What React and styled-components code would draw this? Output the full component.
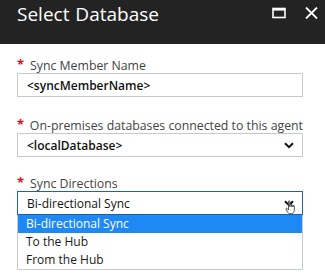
import React from "react";
import styled, { createGlobalStyle } from "styled-components";

const Global = createGlobalStyle`
  body {
    margin: 0;
    background: #ffffff;
    font-family: "Open Sans", "Noto Sans", sans-serif;
  }
`;

const App = () => {
  return (
    <Blade>
      <Global />
      <Header>
        <Title>Select Database</Title>
        <HeaderIcons>
          <svg width="14" height="12" viewBox="0 0 14 12">
            <rect x="1" y="1.5" width="12" height="9" fill="none" stroke="#fff" strokeWidth="1.6" />
            <rect x="1" y="1" width="12" height="2.6" fill="#fff" />
          </svg>
          <svg width="13" height="12" viewBox="0 0 13 12">
            <path d="M1 0.5 L12 11.5 M12 0.5 L1 11.5" stroke="#fff" strokeWidth="1.8" />
          </svg>
        </HeaderIcons>
      </Header>

      <Content>
        <Field>
          <Label>
            <Star>*</Star>Sync Member Name
          </Label>
          <Box>
            <Value bold>&lt;syncMemberName&gt;</Value>
          </Box>
        </Field>

        <Field gap={21}>
          <Label>
            <Star>*</Star>On-premises databases connected to this agent
          </Label>
          <Box>
            <Value bold>&lt;localDatabase&gt;</Value>
            <Chevron />
          </Box>
        </Field>

        <Field gap={19}>
          <Label>
            <Star>*</Star>Sync Directions
          </Label>
          <Box active>
            <Value>Bi-directional Sync</Value>
            <Chevron />
            <Cursor>
              <svg width="12" height="15" viewBox="0 0 14 18">
                <path
                  d="M4 1.5 C4 0.7 5.6 0.7 5.6 1.5 L5.6 8 L5.8 5.6 C5.8 4.8 7.4 4.8 7.4 5.6 L7.4 8 L7.6 6.4 C7.6 5.6 9.2 5.6 9.2 6.4 L9.2 8.4 L9.4 7.2 C9.4 6.4 11 6.4 11 7.2 L11 11.5 C11 14 9.8 16.5 8 16.5 L5.6 16.5 C4.4 16.5 3.6 15.6 2.8 14.4 L1 11 C0.6 10.2 1.6 9.4 2.4 10.2 L4 12 Z"
                  fill="#fff"
                  stroke="#333"
                  strokeWidth="1"
                  strokeLinejoin="round"
                />
              </svg>
            </Cursor>
          </Box>
          <Menu>
            <Option selected>Bi-directional Sync</Option>
            <Option>To the Hub</Option>
            <Option>From the Hub</Option>
          </Menu>
        </Field>
      </Content>
    </Blade>
  );
};

const Chevron = () => (
  <ChevronWrap>
    <svg width="10" height="7" viewBox="0 0 10 7">
      <path d="M1 1.2 L5 5.2 L9 1.2" fill="none" stroke="#111" strokeWidth="2" />
    </svg>
  </ChevronWrap>
);

export default App;

const Blade = styled.div`
  width: 325px;
  height: 275px;
  overflow: hidden;
  background: #ffffff;
`;

const Header = styled.div`
  height: 44px;
  background: #232323;
  display: flex;
  align-items: flex-start;
  justify-content: space-between;
  padding: 0 7px 0 17px;
  box-sizing: border-box;
`;

const Title = styled.div`
  color: #ffffff;
  font-family: "Open Sans", sans-serif;
  font-size: 19px;
  line-height: 29px;
  word-spacing: 1px;
  font-weight: 400;
`;

const HeaderIcons = styled.div`
  display: flex;
  align-items: center;
  gap: 19px;
  padding-top: 7px;
`;

const Content = styled.div`
  padding: 14px 22px 0 17px;
`;

const Field = styled.div`
  position: relative;
  margin-top: ${(p) => (p.gap ? p.gap : 0)}px;
`;

const Label = styled.div`
  font-size: 12.3px;
  line-height: 15px;
  color: #444444;
  display: flex;
  align-items: flex-start;
  white-space: nowrap;
`;

const Star = styled.span`
  color: #e00b1c;
  font-size: 13px;
  font-weight: 700;
  width: 13px;
  margin-top: -1px;
`;

const Box = styled.div`
  position: relative;
  height: 24px;
  box-sizing: border-box;
  border: 1px solid ${(p) => (p.active ? "#1f5fb8" : "#c8c8c8")};
  display: flex;
  align-items: center;
  padding: 0 9px;
`;

const Value = styled.div`
  flex: 1;
  font-size: 12px;
  color: #111111;
  font-weight: ${(p) => (p.bold ? 600 : 400)};
`;

const ChevronWrap = styled.div`
  display: flex;
  align-items: center;
  margin-right: -1px;
`;

const Cursor = styled.div`
  position: absolute;
  right: 5px;
  top: 8px;
  line-height: 0;
`;

const Menu = styled.div`
  position: absolute;
  left: 0;
  right: 0;
  top: 39px;
  border: 1px solid #c5ccd8;
  border-top: none;
  background: #ffffff;
`;

const Option = styled.div`
  height: 18px;
  line-height: 18px;
  padding: 0 8px;
  font-size: 12px;
  color: ${(p) => (p.selected ? "#ffffff" : "#1a1a1a")};
  background: ${(p) => (p.selected ? "#1e88f5" : "transparent")};
`;
